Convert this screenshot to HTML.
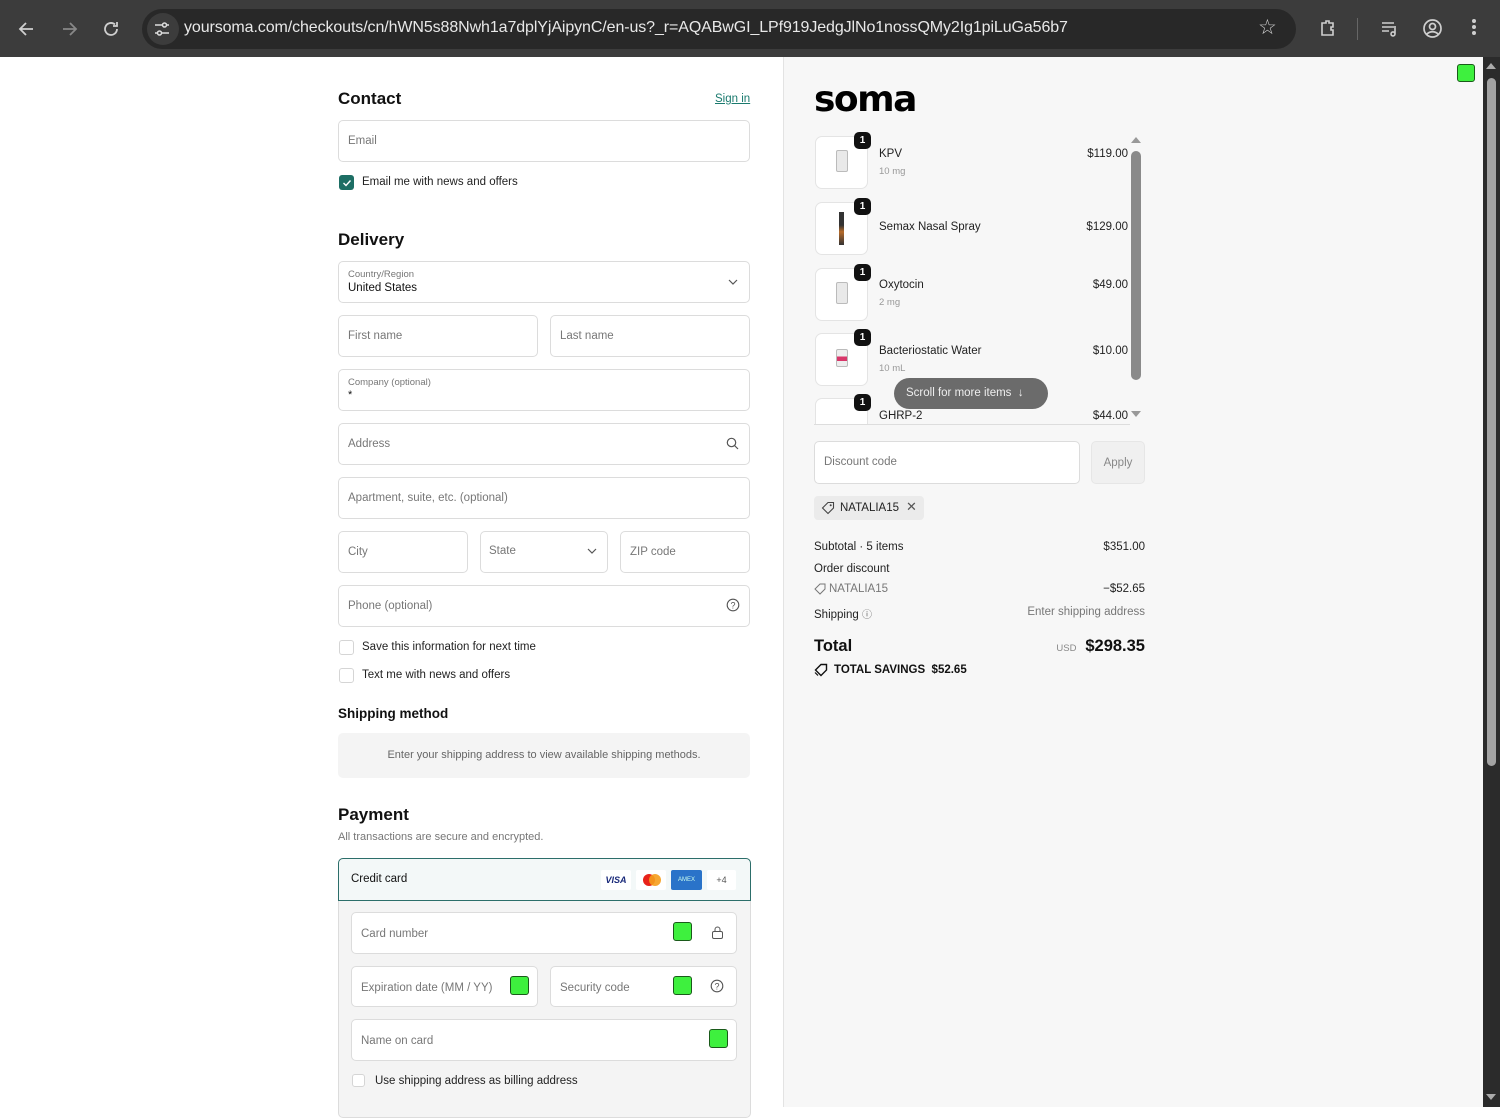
<!DOCTYPE html>
<html><head><meta charset="utf-8"><style>
*{box-sizing:border-box;margin:0;padding:0}
body{width:1500px;height:1107px;overflow:hidden;font-family:"Liberation Sans",sans-serif;background:#fff;position:relative;color:#111}
.a{position:absolute}
.chrome{left:0;top:0;width:1500px;height:57px;background:#3c3c3c}
.url{left:142px;top:9px;width:1154px;height:40px;background:#282828;border-radius:20px}
.urltxt{left:184px;top:19px;font-size:16px;color:#e8e8e8;letter-spacing:-0.1px;white-space:nowrap}
.ic{color:#cfcfcf}
.right{left:783px;top:57px;width:700px;height:1050px;background:#f7f7f7;border-left:1px solid #e3e3e3}
.sb{left:1483px;top:57px;width:17px;height:1050px;background:#2b2b2b}
.thumb{left:1487px;top:78px;width:9px;height:688px;background:#a3a3a3;border-radius:5px}
.h{font-size:17px;font-weight:bold;color:#111;margin-top:1px}
.in{border:1px solid #dcdcdc;border-radius:5px;background:#fff}
.ph{font-size:11.5px;color:#777;margin-top:1px}
.t{font-size:11.5px;color:#222;margin-top:1px}
.cb{width:15px;height:15px;border:1px solid #d5d5d5;border-radius:3px;background:#fff}
.g{width:19px;height:19px;background:#3ef03e;border:1.5px solid #1a5a1a;border-radius:3px}
.thumbimg{width:53px;height:53px;border:1px solid #e4e4e4;border-radius:7px;background:#fff}
.badge{width:17px;height:17px;background:#111;color:#fff;border-radius:5px;font-size:10px;font-weight:bold;text-align:center;line-height:17px}
.vial{width:12px;height:22px;background:#e9e9e9;border:1px solid #bbb;border-radius:2px}
.r{text-align:right}
</style></head><body>
<div class="a chrome"></div>
<div class="a url"></div>
<svg class="a" style="left:17px;top:19px" width="20" height="20" viewBox="0 0 20 20"><path d="M16 10H4M9 4l-6 6 6 6" stroke="#cfcfcf" stroke-width="1.8" fill="none"/></svg>
<svg class="a" style="left:59px;top:19px" width="20" height="20" viewBox="0 0 20 20"><path d="M4 10h12M11 4l6 6-6 6" stroke="#888" stroke-width="1.8" fill="none"/></svg>
<svg class="a" style="left:101px;top:19px" width="20" height="20" viewBox="0 0 20 20"><path d="M16 10a6 6 0 1 1-2-4.5M16 3v4h-4" stroke="#cfcfcf" stroke-width="1.8" fill="none"/></svg>
<div class="a" style="left:147px;top:13px;width:32px;height:32px;border-radius:16px;background:#3c3c3c"></div>
<svg class="a" style="left:153px;top:20px" width="18" height="18" viewBox="0 0 18 18"><path d="M2 5h8M13 5h3M2 13h3M8 13h8" stroke="#ddd" stroke-width="1.6"/><circle cx="11.5" cy="5" r="2" stroke="#ddd" fill="none" stroke-width="1.5"/><circle cx="6.5" cy="13" r="2" stroke="#ddd" fill="none" stroke-width="1.5"/></svg>
<div class="a urltxt">yoursoma.com/checkouts/cn/hWN5s88Nwh1a7dplYjAipynC/en-us?_r=AQABwGI_LPf919JedgJlNo1nossQMy2Ig1piLuGa56b7</div>
<div class="a ic" style="left:1258px;top:15px;font-size:21px">☆</div>
<svg class="a" style="left:1318px;top:18px" width="20" height="20" viewBox="0 0 20 20"><path d="M4 5h4V3h3v2h4v4h-2v3h2v5H4z" stroke="#cfcfcf" stroke-width="1.6" fill="none"/></svg>
<div class="a" style="left:1357px;top:18px;width:1px;height:22px;background:#666"></div>
<svg class="a" style="left:1380px;top:18px" width="20" height="20" viewBox="0 0 20 20"><path d="M2 5h12M2 9h12M2 13h7M15 8v8M15 16a2 2 0 1 1 0-.1" stroke="#cfcfcf" stroke-width="1.6" fill="none"/></svg>
<svg class="a" style="left:1422px;top:18px" width="21" height="21" viewBox="0 0 21 21"><circle cx="10.5" cy="10.5" r="8.5" stroke="#cfcfcf" stroke-width="1.7" fill="none"/><circle cx="10.5" cy="8.5" r="3" stroke="#cfcfcf" stroke-width="1.7" fill="none"/><path d="M5 16c3-3 8-3 11 0" stroke="#cfcfcf" stroke-width="1.7" fill="none"/></svg>
<div class="a" style="left:1472px;top:19px;width:4px;height:4px;border-radius:2px;background:#cfcfcf;box-shadow:0 6px 0 #cfcfcf,0 12px 0 #cfcfcf"></div>

<div class="a right"></div>
<div class="a sb"></div><div class="a thumb"></div>
<div class="a" style="left:1486px;top:63px;width:0;height:0;border-left:5px solid transparent;border-right:5px solid transparent;border-bottom:6px solid #aaa"></div>
<div class="a" style="left:1486px;top:1094px;width:0;height:0;border-left:5px solid transparent;border-right:5px solid transparent;border-top:6px solid #aaa"></div>
<div class="a g" style="left:1457px;top:64px;width:18px;height:18px"></div>

<!-- LEFT -->
<div class="a h" style="left:338px;top:88px">Contact</div>
<div class="a" style="left:715px;top:93px;font-size:11.5px;color:#1a7a6e;text-decoration:underline">Sign in</div>
<div class="a in" style="left:338px;top:120px;width:412px;height:42px"></div>
<div class="a ph" style="left:348px;top:134px">Email</div>
<div class="a" style="left:339px;top:175px;width:15px;height:15px;border-radius:3px;background:#1d6e64"></div>
<svg class="a" style="left:342px;top:178px" width="10" height="10" viewBox="0 0 10 10"><path d="M1.5 5l2.5 2.5 4.5-5" stroke="#fff" stroke-width="1.4" fill="none"/></svg>
<div class="a t" style="left:362px;top:175px">Email me with news and offers</div>

<div class="a h" style="left:338px;top:229px">Delivery</div>
<div class="a in" style="left:338px;top:261px;width:412px;height:42px"></div>
<div class="a" style="left:348px;top:269px;font-size:9.5px;color:#777">Country/Region</div>
<div class="a t" style="left:348px;top:281px;color:#111">United States</div>
<svg class="a" style="left:728px;top:278px" width="10" height="8"><path d="M1 2l4 4 4-4" stroke="#555" fill="none" stroke-width="1.2"/></svg>

<div class="a in" style="left:338px;top:315px;width:200px;height:42px"></div><div class="a ph" style="left:348px;top:329px">First name</div>
<div class="a in" style="left:550px;top:315px;width:200px;height:42px"></div><div class="a ph" style="left:560px;top:329px">Last name</div>
<div class="a in" style="left:338px;top:369px;width:412px;height:42px"></div>
<div class="a" style="left:348px;top:377px;font-size:9.5px;color:#777">Company (optional)</div>
<div class="a" style="left:348px;top:389px;font-size:11px;color:#111">*</div>
<div class="a in" style="left:338px;top:423px;width:412px;height:42px"></div><div class="a ph" style="left:348px;top:437px">Address</div>
<svg class="a" style="left:726px;top:437px" width="13" height="13"><circle cx="5.5" cy="5.5" r="4.2" stroke="#555" fill="none" stroke-width="1.2"/><path d="M8.5 8.5l3.5 3.5" stroke="#555" stroke-width="1.2"/></svg>
<div class="a in" style="left:338px;top:477px;width:412px;height:42px"></div><div class="a ph" style="left:348px;top:491px">Apartment, suite, etc. (optional)</div>
<div class="a in" style="left:338px;top:531px;width:130px;height:42px"></div><div class="a ph" style="left:348px;top:545px">City</div>
<div class="a in" style="left:480px;top:531px;width:128px;height:42px"></div><div class="a ph" style="left:489px;top:544px">State</div>
<svg class="a" style="left:587px;top:547px" width="10" height="8"><path d="M1 2l4 4 4-4" stroke="#555" fill="none" stroke-width="1.2"/></svg>
<div class="a in" style="left:620px;top:531px;width:130px;height:42px"></div><div class="a ph" style="left:630px;top:545px">ZIP code</div>
<div class="a in" style="left:338px;top:585px;width:412px;height:42px"></div><div class="a ph" style="left:348px;top:599px">Phone (optional)</div>
<svg class="a" style="left:726px;top:598px" width="14" height="14"><circle cx="7" cy="7" r="5.8" stroke="#555" fill="none" stroke-width="1.1"/><text x="7" y="10.3" font-size="9" text-anchor="middle" fill="#555" font-family="Liberation Sans">?</text></svg>
<div class="a cb" style="left:339px;top:640px"></div><div class="a t" style="left:362px;top:640px">Save this information for next time</div>
<div class="a cb" style="left:339px;top:668px"></div><div class="a t" style="left:362px;top:668px">Text me with news and offers</div>
<div class="a" style="left:338px;top:706px;font-size:13.5px;font-weight:bold">Shipping method</div>
<div class="a" style="left:338px;top:733px;width:412px;height:45px;background:#f4f4f4;border-radius:5px"></div>
<div class="a" style="left:338px;top:749px;width:412px;text-align:center;font-size:11px;color:#666">Enter your shipping address to view available shipping methods.</div>

<div class="a h" style="left:338px;top:804px">Payment</div>
<div class="a" style="left:338px;top:831px;font-size:11px;color:#777">All transactions are secure and encrypted.</div>
<div class="a" style="left:338px;top:858px;width:413px;height:260px;border:1px solid #dcdcdc;border-radius:5px;background:#f4f4f4"></div>
<div class="a" style="left:338px;top:858px;width:413px;height:43px;border:1.5px solid #2c6e6a;border-radius:5px 5px 0 0;background:#f3f8f8"></div>
<div class="a t" style="left:351px;top:872px;color:#111">Credit card</div>
<div class="a" style="left:601px;top:870px;width:30px;height:20px;background:#fff;border-radius:2px;font-size:9px;font-weight:bold;font-style:italic;color:#1a2a7a;text-align:center;line-height:20px">VISA</div>
<div class="a" style="left:636px;top:870px;width:30px;height:20px;background:#fff;border-radius:2px"></div>
<div class="a" style="left:643px;top:874px;width:12px;height:12px;border-radius:6px;background:#e8221a"></div>
<div class="a" style="left:649px;top:874px;width:12px;height:12px;border-radius:6px;background:#f59d1c;opacity:.9"></div>
<div class="a" style="left:671px;top:870px;width:31px;height:20px;background:#2a73c9;border-radius:2px;font-size:6px;color:#cfe;text-align:center;line-height:20px">AMEX</div>
<div class="a" style="left:707px;top:870px;width:29px;height:20px;background:#fff;border-radius:2px;font-size:9px;color:#555;text-align:center;line-height:20px">+4</div>
<div class="a in" style="left:351px;top:912px;width:386px;height:42px"></div><div class="a ph" style="left:361px;top:927px">Card number</div>
<div class="a g" style="left:673px;top:922px"></div>
<svg class="a" style="left:711px;top:925px" width="13" height="15"><rect x="1.5" y="6.5" width="10" height="7" rx="1.5" stroke="#555" fill="none"/><path d="M4 6.5V4.5a2.5 2.5 0 0 1 5 0v2" stroke="#555" fill="none"/></svg>
<div class="a in" style="left:351px;top:966px;width:187px;height:41px"></div><div class="a ph" style="left:361px;top:981px">Expiration date (MM / YY)</div>
<div class="a g" style="left:510px;top:976px"></div>
<div class="a in" style="left:550px;top:966px;width:187px;height:41px"></div><div class="a ph" style="left:560px;top:981px">Security code</div>
<div class="a g" style="left:673px;top:976px"></div>
<svg class="a" style="left:710px;top:979px" width="14" height="14"><circle cx="7" cy="7" r="5.8" stroke="#555" fill="none" stroke-width="1.1"/><text x="7" y="10.3" font-size="9" text-anchor="middle" fill="#555" font-family="Liberation Sans">?</text></svg>
<div class="a in" style="left:351px;top:1019px;width:386px;height:42px"></div><div class="a ph" style="left:361px;top:1034px">Name on card</div>
<div class="a g" style="left:709px;top:1029px"></div>
<div class="a cb" style="left:352px;top:1074px;width:13px;height:13px"></div>
<div class="a t" style="left:375px;top:1074px">Use shipping address as billing address</div>

<!-- RIGHT -->
<div class="a" style="left:814px;top:78px;font-size:36px;font-weight:900;letter-spacing:-1.5px;color:#000;font-family:'DejaVu Sans',sans-serif;line-height:44px">soma</div>
<div class="a" style="left:1131px;top:151px;width:10px;height:229px;background:#8a8a8a;border-radius:5px"></div>
<div class="a" style="left:1131px;top:137px;border-left:5px solid transparent;border-right:5px solid transparent;border-bottom:6px solid #999"></div>
<div class="a" style="left:1131px;top:411px;border-left:5px solid transparent;border-right:5px solid transparent;border-top:6px solid #999"></div>

<div class="a thumbimg" style="left:815px;top:136px"></div><div class="a vial" style="left:836px;top:150px"></div><div class="a badge" style="left:854px;top:132px">1</div>
<div class="a t" style="left:879px;top:147px">KPV</div><div class="a" style="left:879px;top:166px;font-size:9.5px;color:#999">10 mg</div>
<div class="a t r" style="left:1040px;top:147px;width:88px">$119.00</div>

<div class="a thumbimg" style="left:815px;top:202px"></div><div class="a" style="left:839px;top:212px;width:5px;height:33px;background:linear-gradient(#333 40%,#b76b2a 60%,#333)"></div><div class="a badge" style="left:854px;top:198px">1</div>
<div class="a t" style="left:879px;top:220px">Semax Nasal Spray</div>
<div class="a t r" style="left:1040px;top:220px;width:88px">$129.00</div>

<div class="a thumbimg" style="left:815px;top:268px"></div><div class="a vial" style="left:836px;top:282px"></div><div class="a badge" style="left:854px;top:264px">1</div>
<div class="a t" style="left:879px;top:278px">Oxytocin</div><div class="a" style="left:879px;top:297px;font-size:9.5px;color:#999">2 mg</div>
<div class="a t r" style="left:1040px;top:278px;width:88px">$49.00</div>

<div class="a thumbimg" style="left:815px;top:333px"></div><div class="a vial" style="left:836px;top:349px;height:18px;background:linear-gradient(#eee 40%,#d8376a 40%,#d8376a 70%,#eee 70%)"></div><div class="a badge" style="left:854px;top:329px">1</div>
<div class="a t" style="left:879px;top:344px">Bacteriostatic Water</div><div class="a" style="left:879px;top:363px;font-size:9.5px;color:#999">10 mL</div>
<div class="a t r" style="left:1040px;top:344px;width:88px">$10.00</div>

<div class="a thumbimg" style="left:815px;top:398px;height:26px;border-bottom:none;border-radius:7px 7px 0 0"></div><div class="a badge" style="left:854px;top:394px">1</div>
<div class="a t" style="left:879px;top:409px">GHRP-2</div>
<div class="a t r" style="left:1040px;top:409px;width:88px">$44.00</div>
<div class="a" style="left:814px;top:424px;width:316px;height:1px;background:#ddd"></div>
<div class="a" style="left:894px;top:378px;width:154px;height:31px;border-radius:16px;background:#6b6b6b;color:#eee;font-size:11.5px;line-height:31px;padding-left:12px">Scroll for more items&nbsp; ↓</div>

<div class="a in" style="left:814px;top:441px;width:266px;height:43px"></div><div class="a ph" style="left:824px;top:455px">Discount code</div>
<div class="a" style="left:1091px;top:441px;width:54px;height:43px;border:1px solid #e6e6e6;border-radius:5px;background:#f0f0f0;font-size:11.5px;color:#888;text-align:center;line-height:42px">Apply</div>
<div class="a" style="left:814px;top:496px;width:110px;height:24px;background:#ebebeb;border-radius:4px"></div>
<svg class="a" style="left:821px;top:501px" width="14" height="14"><path d="M7 1.5h5.5V7L7 12.5 1.5 7z" stroke="#444" fill="none" stroke-width="1.1"/><circle cx="9.7" cy="4.3" r="1" fill="#444"/></svg>
<div class="a t" style="left:840px;top:501px">NATALIA15</div>
<div class="a" style="left:906px;top:499px;font-size:13px;color:#555">✕</div>

<div class="a t" style="left:814px;top:540px">Subtotal · 5 items</div><div class="a t r" style="left:1045px;top:540px;width:100px">$351.00</div>
<div class="a t" style="left:814px;top:562px">Order discount</div>
<svg class="a" style="left:814px;top:583px" width="12" height="12"><path d="M6 1h5v5L6 11 1 6z" stroke="#777" fill="none"/></svg>
<div class="a" style="left:829px;top:583px;font-size:11.5px;color:#777">NATALIA15</div>
<div class="a t r" style="left:1045px;top:582px;width:100px">−$52.65</div>
<div class="a t" style="left:814px;top:605px">Shipping <span style="font-size:10px;color:#666">ⓘ</span></div>
<div class="a r" style="left:985px;top:606px;width:160px;font-size:11.5px;color:#777">Enter shipping address</div>
<div class="a" style="left:814px;top:637px;font-size:16.5px;font-weight:bold">Total</div>
<div class="a r" style="left:1000px;top:637px;width:145px;white-space:nowrap"><span style="font-size:9.5px;color:#888">USD</span>&nbsp; <span style="font-size:16.5px;font-weight:bold">$298.35</span></div>
<svg class="a" style="left:814px;top:663px" width="14" height="14"><path d="M7 1.5h5.5V7L7 12.5 1.5 7z" stroke="#111" fill="none" stroke-width="1.4"/><path d="M4 12.5L1 9.5" stroke="#111" stroke-width="1.2"/></svg>
<div class="a" style="left:834px;top:664px;font-size:11.5px;font-weight:bold;color:#111">TOTAL SAVINGS&nbsp; $52.65</div>
</body></html>
